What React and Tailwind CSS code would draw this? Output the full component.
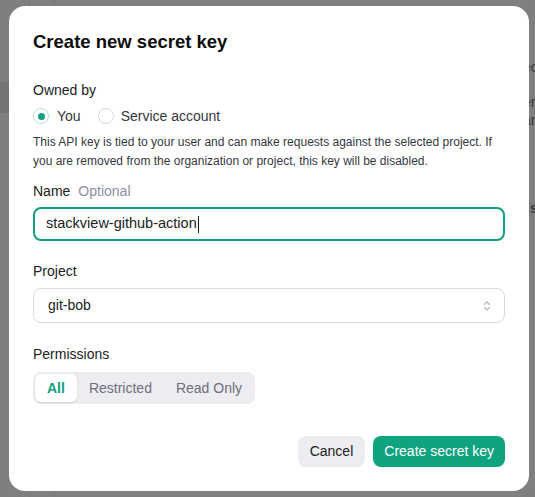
import React from "react";

function Radio({ checked }) {
  return checked ? (
    <span className="flex h-[16px] w-[16px] shrink-0 items-center justify-center rounded-full border border-[#b9dfd3] bg-white">
      <span className="block h-[7px] w-[7px] rounded-full bg-[#10a37f]" />
    </span>
  ) : (
    <span className="block h-[16px] w-[16px] shrink-0 rounded-full border border-[#d9d9e3] bg-white" />
  );
}

export default function App() {
  return (
    <div className="relative h-[497px] w-[535px] overflow-hidden bg-[#7f7f7f] font-['Liberation_Sans',Arial,sans-serif]">
      {/* dimmed page behind the overlay */}
      <div className="flex h-full">
        <div className="w-[30px] border-r border-[#777777]">
          <div className="mt-[82px] h-[31px] w-full bg-[#747474]" />
        </div>
        <div className="w-[25px] border-r border-[#777777]" />
        <div className="flex-1" />
        <div className="flex w-[30px] flex-col pl-[10px] text-[15px] leading-[18px] text-[#3a3a3a]">
          <span className="mt-[58px]">sec</span>
          <span className="mt-[17px]">ser</span>
          <span className="mt-[0px]">car</span>
          <span className="mt-[70px] font-bold">Als</span>
        </div>
      </div>

      {/* modal */}
      <div className="absolute left-[9px] top-[6px] flex h-[485px] w-[520px] flex-col rounded-[16px] bg-white pl-[24px] pr-[24px] pt-[22px] text-[#202123]">
        <h2 className="text-[18.5px] font-bold leading-[28px] text-[#0d0d0d]">Create new secret key</h2>

        <div className="mt-[24px] text-[14px] leading-[20px] text-[#202123]">Owned by</div>
        <div className="mt-[6px] flex h-[20px] items-center text-[14px] leading-[20px] text-[#353740]">
          <Radio checked />
          <span className="ml-[8px]">You</span>
          <span className="ml-[17px] flex">
            <Radio />
          </span>
          <span className="ml-[7px]">Service account</span>
        </div>

        <p className="mt-[7px] text-[12px] leading-[19px] text-[#353740]">
          This API key is tied to your user and can make requests against the selected project. If you are removed
          from the organization or project, this key will be disabled.
        </p>

        <div className="mt-[10px] flex gap-[8px] text-[14px] leading-[20px]">
          <span className="text-[#202123]">Name</span>
          <span className="text-[#8e8ea0]">Optional</span>
        </div>
        <div className="mt-[6px] flex h-[34px] items-center rounded-[8px] border-2 border-[#10a37f] px-[11px] text-[14.5px] text-[#202123]">
          <span>stackview-github-action</span>
          <span className="ml-[1px] h-[17px] w-[1px] bg-[#202123]" />
        </div>

        <div className="mt-[20px] text-[14px] leading-[20px] text-[#202123]">Project</div>
        <div className="mt-[7px] flex h-[35px] items-center justify-between rounded-[8px] border border-[#d9d9e3] pl-[14px] pr-[13px] text-[14px] text-[#202123]">
          <span>git-bob</span>
          <svg width="8" height="12" viewBox="0 0 8 12" fill="none" stroke="#b4b4c0" strokeWidth="1.2" strokeLinecap="round" strokeLinejoin="round">
            <path d="M1.5 4.5 L4 2 L6.5 4.5" />
            <path d="M1.5 7.5 L4 10 L6.5 7.5" />
          </svg>
        </div>

        <div className="mt-[21px] text-[14px] leading-[20px] text-[#202123]">Permissions</div>
        <div className="mt-[8px] flex h-[32px] w-fit items-center whitespace-nowrap rounded-[8px] bg-[#ececf1] p-[2px] text-[14px]">
          <span className="flex h-[28px] shrink-0 items-center rounded-[6px] bg-white px-[12px] font-bold text-[#10a37f] shadow-[0_1px_2px_rgba(0,0,0,0.12)]">
            All
          </span>
          <span className="flex h-[28px] shrink-0 items-center px-[12px] text-[#6e6e80]">Restricted</span>
          <span className="flex h-[28px] shrink-0 items-center pl-[12px] pr-[11px] text-[#6e6e80]">Read Only</span>
        </div>

        <div className="mt-[32px] flex justify-end gap-[8px] text-[14px]">
          <button className="flex h-[31px] items-center rounded-[8px] bg-[#ececf1] px-[12px] text-[#202123]">Cancel</button>
          <button className="flex h-[31px] items-center rounded-[8px] bg-[#10a37f] px-[11px] text-white">Create secret key</button>
        </div>
      </div>
    </div>
  );
}
